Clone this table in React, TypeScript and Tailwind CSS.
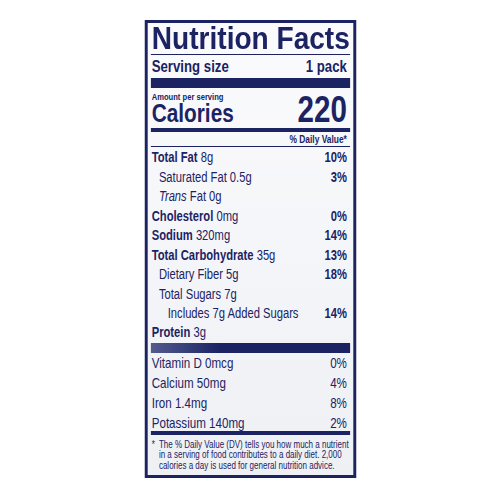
import React from "react"

interface Row {
	label: string // bold or italic part of the label
	amount: string // plain amount after the label
	dv?: string // percent daily value
	indent?: 0 | 1 | 2
	bold?: boolean
	italic?: boolean
	shortLine?: boolean // line under row starts indented
}

const rows: Row[] = [
	{ label: "Total Fat", amount: "8g", dv: "10%", bold: true },
	{ label: "Saturated Fat", amount: "0.5g", dv: "3%", indent: 1 },
	{ label: "Trans", amount: "Fat 0g", indent: 1, italic: true },
	{ label: "Cholesterol", amount: "0mg", dv: "0%", bold: true },
	{ label: "Sodium", amount: "320mg", dv: "14%", bold: true },
	{ label: "Total Carbohydrate", amount: "35g", dv: "13%", bold: true },
	{ label: "Dietary Fiber", amount: "5g", dv: "18%", indent: 1 },
	{ label: "Total Sugars", amount: "7g", indent: 1, shortLine: true },
	{ label: "Includes 7g Added Sugars", amount: "", dv: "14%", indent: 2 },
]

const vitamins = [
	{ label: "Vitamin D 0mcg", dv: "0%" },
	{ label: "Calcium 50mg", dv: "4%" },
	{ label: "Iron 1.4mg", dv: "8%" },
	{ label: "Potassium 140mg", dv: "2%" },
]

export default function App() {
	return (
		<div className="w-[500px] h-[500px] bg-white flex justify-center text-[#1b2363] font-['Liberation_Sans',Arial,sans-serif]">
			{/* label is laid out wide, then squeezed to a condensed look */}
			<div className="mt-[20px] w-[265px] h-[458px] shrink-0 scale-x-[0.8] border-x-[4px] border-y-[3px] border-[#1b2363] bg-gradient-to-b from-[#fbfbfd] to-[#eef0f4] px-[4px] flex flex-col">
				{/* Title */}
				<div className="h-[31px] flex justify-center">
					<span className="inline-block scale-x-[1.096] text-[32px] leading-[31px] font-bold whitespace-nowrap">
						Nutrition Facts
					</span>
				</div>
				<div className="h-px bg-[#1b2363]" />
				<div className="h-[23px] flex items-center justify-between pl-[1px] pr-[4px] text-[16.5px] leading-[23px] font-bold">
					<span>Serving size</span>
					<span>1 pack</span>
				</div>
				<div className="h-[10px] bg-[#1b2363]" />

				{/* Calories */}
				<div className="h-[40px] flex items-start justify-between pl-[1px] pr-[4px] font-bold">
					<div className="flex flex-col pt-[3px]">
						<span className="text-[9.5px] leading-[12px] whitespace-nowrap">Amount per serving</span>
						<span className="text-[26px] leading-[20px]">Calories</span>
					</div>
					<span className="mt-[7px] text-[37px] leading-[30px]">220</span>
				</div>
				<div className="h-[4px] bg-[#1b2363]" />
				<div className="h-[14px] flex items-center justify-end pr-[4px] text-[10.5px] leading-[14px] font-bold">
					% Daily Value*
				</div>
				<div className="h-px bg-[#1b2363]" />

				{/* Nutrients */}
				{rows.map((row) => (
					<div key={row.label} className="h-[19.5px] flex flex-col">
						<div
							className={`flex-1 flex items-center justify-between text-[14px] pr-[4px] whitespace-nowrap ${
								row.indent === 1 ? "pl-[10px]" : row.indent === 2 ? "pl-[21px]" : "pl-[1px]"
							}`}
						>
							<span>
								{row.italic ? (
									<i>{row.label}</i>
								) : (
									<span className={row.bold ? "font-bold" : ""}>{row.label}</span>
								)}
								{row.amount && ` ${row.amount}`}
							</span>
							{row.dv && <span className="font-bold">{row.dv}</span>}
						</div>
						<div className={`h-px bg-[#1b2363] ${row.shortLine ? "ml-[16px]" : ""}`} />
					</div>
				))}
				<div className="h-[20px] flex items-center pl-[1px] text-[14px]">
					<span className="font-bold">Protein</span>&nbsp;3g
				</div>
				<div className="h-[10px] bg-gradient-to-r from-[#535b8f] via-[#1b2363] via-35% to-[#1b2363]" />

				{/* Vitamins and minerals */}
				{vitamins.map((v, index) => (
					<div key={v.label} className={`${index !== vitamins.length - 1 ? "h-[20px]" : "h-[18.5px]"} flex flex-col`}>
						<div className="flex-1 flex items-center justify-between pl-[1px] pr-[4px] text-[14.5px] whitespace-nowrap">
							<span>{v.label}</span>
							<span>{v.dv}</span>
						</div>
						{index !== vitamins.length - 1 && <div className="h-px bg-[#1b2363]" />}
					</div>
				))}
				<div className="h-[4px] bg-[#1b2363]" />

				{/* Footnote */}
				<div className="flex pt-[4.5px] pl-[1px] text-[10px] leading-[10.5px] whitespace-nowrap">
					<span className="w-[9px] shrink-0">*</span>
					<span>
						The % Daily Value (DV) tells you how much a nutrient
						<br />
						in a serving of food contributes to a daily diet. 2,000
						<br />
						calories a day is used for general nutrition advice.
					</span>
				</div>
			</div>
		</div>
	)
}
